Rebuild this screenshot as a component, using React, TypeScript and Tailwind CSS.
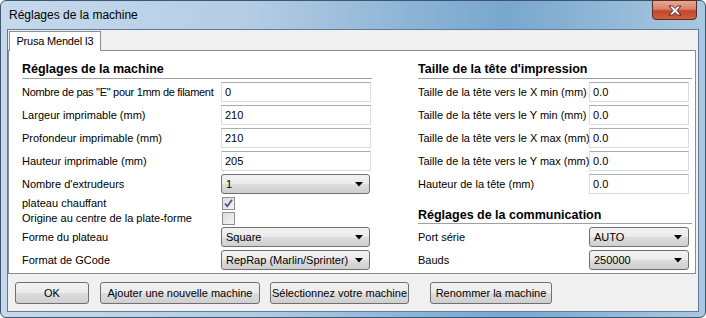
import React from "react";

const font = { fontFamily: '"Liberation Sans", Arial, sans-serif' };

function TextBox({ value, w }: { value: string; w: string }) {
  return (
    <div
      className={`${w} h-[20px] bg-white border border-[#d9dce2] border-t-[#abadb3] flex items-center pl-[3px] text-[11px] text-black`}
    >
      {value}
    </div>
  );
}

function Arrow() {
  return (
    <svg width="8" height="5" viewBox="0 0 8 5" className="shrink-0">
      <polygon points="0,0 8,0 4,4.5" fill="#000" />
    </svg>
  );
}

function Combo({ value, w }: { value: string; w: string }) {
  return (
    <div
      className={`${w} h-[20px] rounded-[3px] border border-[#707070] bg-[linear-gradient(to_bottom,#f2f2f2_0%,#ebebeb_50%,#dddddd_50%,#cfcfcf_100%)] flex items-center justify-between pl-[4px] pr-[6px] text-[11px] text-black`}
    >
      <span>{value}</span>
      <Arrow />
    </div>
  );
}

function Check({ checked }: { checked?: boolean }) {
  return (
    <div className="w-[13px] h-[13px] border border-[#8e8f8f] bg-[linear-gradient(135deg,#dcdcdc_0%,#f4f4f4_100%)] flex items-center justify-center">
      {checked && (
        <svg width="11" height="11" viewBox="0 0 11 11">
          <path d="M2 5.5 L4.3 8.3 L9 1.8" stroke="#4a5a86" strokeWidth="1.8" fill="none" />
        </svg>
      )}
    </div>
  );
}

function Header({ text, h, pb }: { text: string; h: string; pb: string }) {
  return (
    <div className={`${h} ${pb} flex items-end border-b border-[#a0a0a0]`}>
      <span className="text-[12.5px] font-bold leading-[15px] text-black">{text}</span>
    </div>
  );
}

function LRow({
  label,
  children,
  mt = "mt-[3px]",
  tight = false,
}: {
  label: string;
  children: React.ReactNode;
  mt?: string;
  tight?: boolean;
}) {
  return (
    <div className={`${mt} h-[20px] flex items-center`}>
      <div
        className={`w-[199px] text-[11px] text-black whitespace-nowrap ${tight ? "tracking-[-0.3px]" : ""}`}
      >
        {label}
      </div>
      {children}
    </div>
  );
}

function RRow({ label, children, mt = "mt-[3px]" }: { label: string; children: React.ReactNode; mt?: string }) {
  return (
    <div className={`${mt} h-[20px] flex items-center`}>
      <div className="w-[171px] text-[11px] text-black whitespace-nowrap">{label}</div>
      {children}
    </div>
  );
}

function Btn({ label, w, ml }: { label: string; w: string; ml: string }) {
  return (
    <div
      className={`${w} ${ml} h-[22px] rounded-[3px] border border-[#707070] bg-[linear-gradient(to_bottom,#f2f2f2_0%,#ebebeb_50%,#dddddd_50%,#cfcfcf_100%)] flex items-center justify-center text-[11px] text-black whitespace-nowrap`}
    >
      {label}
    </div>
  );
}

export default function App() {
  return (
    <div style={font} className="w-[706px] h-[318px] overflow-hidden">
      <div className="relative w-[706px] h-[318px] rounded-[6px] border border-[#3e566f] bg-[linear-gradient(to_right,#c6d9ec_0%,#b4cde5_35%,#86b0d4_62%,#78a7ce_72%,#a9c8e1_100%)] flex flex-col px-[6px]">
        {/* title bar */}
        <div className="h-[28px] flex items-center pl-[2px] text-[12px] text-black">
          Réglages de la machine
        </div>
        {/* close button */}
        <div className="absolute top-[-1px] right-[8px] w-[45px] h-[20px] rounded-b-[4px] border border-[#5b2a23] bg-[linear-gradient(to_bottom,#e8a894_0%,#d8826c_45%,#c5442d_55%,#d0603f_100%)] flex items-center justify-center">
          <svg width="14" height="11" viewBox="0 0 14 11">
            <polygon
              points="1,1 4.5,1 7,3.6 9.5,1 13,1 9,5.5 13,10 9.5,10 7,7.4 4.5,10 1,10 5,5.5"
              fill="#ffffff"
              stroke="#4a2a28"
              strokeWidth="1"
              strokeLinejoin="round"
            />
          </svg>
        </div>
        {/* client */}
        <div className="w-[692px] h-[283px] border border-[#5f7b96] bg-[#f0f0f0] flex flex-col">
          {/* tab strip */}
          <div className="h-[20px] flex items-end pl-[1px]">
            <div className="relative z-10 w-[92px] h-[20px] mb-[-1px] bg-white border border-b-0 border-[#898c95] flex items-center justify-center text-[11px] text-black tracking-[-0.2px] whitespace-nowrap">
              Prusa Mendel I3
            </div>
          </div>
          {/* panel */}
          <div className="w-[688px] h-[224px] bg-white border border-[#898c95] flex pl-[13px]">
            {/* left column */}
            <div className="w-[350px] flex flex-col">
              <Header text="Réglages de la machine" h="h-[28px]" pb="pb-[1px]" />
              <LRow label={'Nombre de pas "E" pour 1mm de filament'} tight>
                <TextBox value="0" w="w-[150px]" />
              </LRow>
              <LRow label="Largeur imprimable (mm)">
                <TextBox value="210" w="w-[150px]" />
              </LRow>
              <LRow label="Profondeur imprimable (mm)">
                <TextBox value="210" w="w-[150px]" />
              </LRow>
              <LRow label="Hauteur imprimable (mm)">
                <TextBox value="205" w="w-[150px]" />
              </LRow>
              <LRow label="Nombre d'extrudeurs">
                <Combo value="1" w="w-[149px]" />
              </LRow>
              <div className="mt-[2px] h-[15px] flex items-center">
                <div className="w-[200px] text-[11px] text-black">plateau chauffant</div>
                <Check checked />
              </div>
              <div className="h-[15px] flex items-center">
                <div className="w-[200px] text-[11px] text-black">Origine au centre de la plate-forme</div>
                <Check />
              </div>
              <LRow label="Forme du plateau" mt="mt-[1px]">
                <Combo value="Square" w="w-[149px]" />
              </LRow>
              <LRow label="Format de GCode">
                <Combo value="RepRap (Marlin/Sprinter)" w="w-[149px]" />
              </LRow>
            </div>
            {/* right column */}
            <div className="w-[274px] ml-[46px] flex flex-col">
              <Header text="Taille de la tête d'impression" h="h-[28px]" pb="pb-[1px]" />
              <RRow label="Taille de la tête vers le X min (mm)">
                <TextBox value="0.0" w="w-[100px]" />
              </RRow>
              <RRow label="Taille de la tête vers le Y min (mm)">
                <TextBox value="0.0" w="w-[100px]" />
              </RRow>
              <RRow label="Taille de la tête vers le X max (mm)">
                <TextBox value="0.0" w="w-[100px]" />
              </RRow>
              <RRow label="Taille de la tête vers le Y max (mm)">
                <TextBox value="0.0" w="w-[100px]" />
              </RRow>
              <RRow label="Hauteur de la tête (mm)">
                <TextBox value="0.0" w="w-[100px]" />
              </RRow>
              <Header text="Réglages de la communication" h="h-[30px]" pb="pb-[0px]" />
              <RRow label="Port série">
                <Combo value="AUTO" w="w-[100px]" />
              </RRow>
              <RRow label="Bauds">
                <Combo value="250000" w="w-[100px]" />
              </RRow>
            </div>
          </div>
          {/* buttons */}
          <div className="flex pt-[8px]">
            <Btn label="OK" w="w-[74px]" ml="ml-[7px]" />
            <Btn label="Ajouter une nouvelle machine" w="w-[160px]" ml="ml-[11px]" />
            <Btn label="Sélectionnez votre machine" w="w-[139px]" ml="ml-[10px]" />
            <Btn label="Renommer la machine" w="w-[122px]" ml="ml-[21px]" />
          </div>
        </div>
      </div>
    </div>
  );
}
